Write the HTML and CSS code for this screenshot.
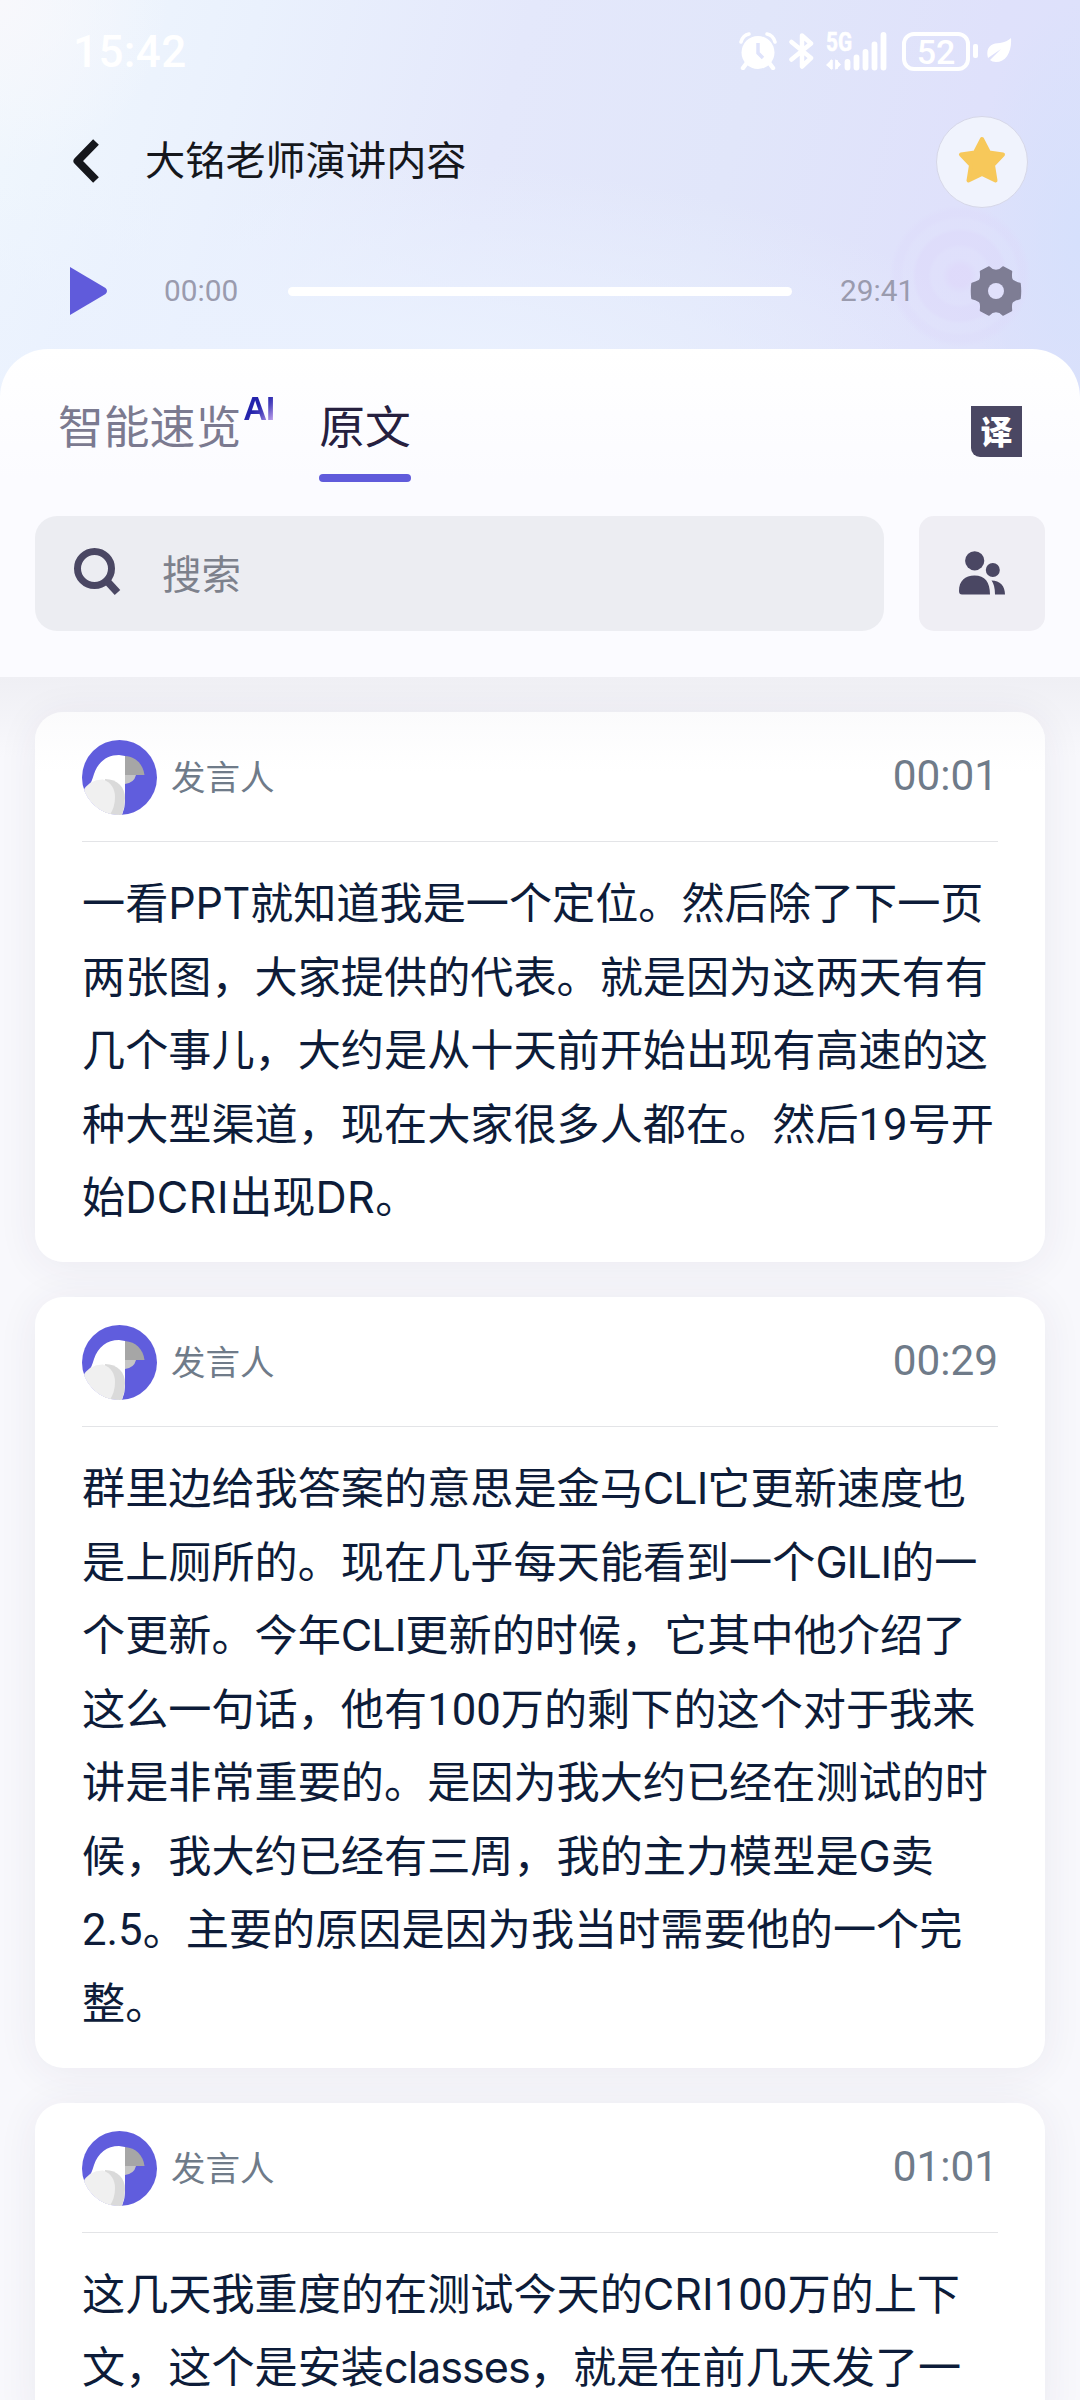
FILE: index.html
```html
<!DOCTYPE html>
<html lang="zh-CN">
<head>
<meta charset="utf-8">
<title>大铭老师演讲内容</title>
<link rel="stylesheet" href="styles.css">
</head>
<body>
<svg class="defs" width="0" height="0" aria-hidden="true">
  <symbol id="avatar" viewBox="0 0 75 75">
    <clipPath id="disc"><circle cx="37.5" cy="37.5" r="37.5"/></clipPath>
    <g clip-path="url(#disc)">
      <rect width="75" height="75" fill="#605ddd"/>
      <path d="M0 52C9 46 10 40 12 34C16 22 25 15 37 15L43 16V61Q43 69 39 77H0Z" fill="#fff"/>
      <path d="M43 16C54 17 61 24 62.500 35H43Z" fill="#a6a6a6"/>
      <path d="M43 35H54Q52 43 43 44Z" fill="#c5c5c5"/>
      <path d="M23 39C36 39 43 48 43 58Q43 68 39 77H20Z" fill="#dadada"/>
      <path d="M0 52Q8 39 21 39.500C29 42 33 49 33 57Q33 69 26 77H0Z" fill="#f0f0f0"/>
    </g>
  </symbol>
</svg>
<div class="screen">
  <header class="top">
    <div class="glow"></div>
    <div class="status">
      <span class="clock">15:42</span>
      <div class="status-icons">
        <svg class="i-alarm" width="38" height="38" viewBox="0 0 38 38"><circle cx="19" cy="20.500" r="16.500" fill="#fff"/><path d="M2 10Q4 3 10 2M28 2Q34 3 36 10" stroke="#fff" stroke-width="3.500" fill="none" stroke-linecap="round"/><path d="M7 32L4 36M31 32L34 36" stroke="#fff" stroke-width="4.500" stroke-linecap="round"/><path d="M19 11V21L24 26" stroke="#dfe3fb" stroke-width="3.500" fill="none"/></svg>
        <svg class="i-bt" width="26" height="38" viewBox="0 0 26 38"><path d="M2.500 10L22 26L13 34.500V3.500L22 11.500L2.500 27.500" stroke="#fff" stroke-width="4.500" fill="none" stroke-linejoin="round" stroke-linecap="round"/></svg>
        <svg class="i-sig" width="62" height="39" viewBox="0 0 62 39"><text x="0" y="19" class="net" textLength="26" lengthAdjust="spacingAndGlyphs">5G</text><path d="M0 33L6 27V38M9.500 27V38L15 32.500" fill="#fff"/><path d="M5.500 28V37M10.500 28V37" stroke="#fff" stroke-width="2.500"/><path d="M21.500 30V35.500M30.500 25.500V35.500M39.500 20V35.500M48.500 12.500V35.500M57.500 3V35.500" stroke="#fff" stroke-width="5.800" stroke-linecap="round"/></svg>
        <div class="battery">52</div>
        <span class="nub"></span>
        <svg class="i-leaf" width="26" height="26" viewBox="0 0 26 26"><path d="M25 0C26 14 20 24 10 24Q6 24 4 22L15 11L2 20C-1 9 6 5 14 5Q21 4 25 0Z" fill="#fff"/></svg>
      </div>
    </div>
    <div class="titlebar">
      <svg class="back" width="28" height="44" viewBox="0 0 28 44"><path d="M24 3L5.500 22L24 41" stroke="#15171c" stroke-width="8" fill="none" stroke-linejoin="round"/></svg>
      <h1>大铭老师演讲内容</h1>
      <div class="fav"><svg width="50" height="50" viewBox="0 0 50 50"><path d="M25 4L32 17.500L46 19.500L36 30L38.500 45.500L25 39L11.500 45.500L14 30L4 19.500L18 17.500Z" fill="#f7c85a" stroke="#f7c85a" stroke-width="4" stroke-linejoin="round"/></svg></div>
    </div>
    <div class="player">
      <svg class="play" width="38" height="48" viewBox="0 0 38 48"><path d="M0 0L35.500 21Q38.500 24 35.500 27L0 48Z" fill="#605bdb"/></svg>
      <span class="time">00:00</span>
      <div class="track"></div>
      <span class="time total">29:41</span>
      <svg class="gear" width="52" height="52" viewBox="-26 -26 52 52"><path fill="#7e7d94" stroke="#7e7d94" stroke-width="1.500" stroke-linejoin="round" d="M-7 -24Q-4 -20.500 0 -20.500Q4 -20.500 7 -24L15.500 -19.500Q14.500 -11 17.500 -10Q20 -8.500 24 -7.500Q25 0 24 7.500Q20 8.500 17.500 10Q14.500 11 15.500 19.500L7 24Q4 20.500 0 20.500Q-4 20.500 -7 24L-15.500 19.500Q-14.500 11 -17.500 10Q-20 8.500 -24 7.500Q-25 0 -24 -7.500Q-20 -8.500 -17.500 -10Q-14.500 -11 -15.500 -19.500Z"/><circle r="8" fill="#e0e0fb"/></svg>
    </div>
  </header>
  <section class="panel">
    <nav class="tabs">
      <span class="tab muted">智能速览</span><span class="ai">AI</span>
      <span class="tab active">原文</span>
      <span class="translate">译</span>
    </nav>
    <div class="search-row">
      <div class="search">
        <svg width="48" height="48" viewBox="0 0 48 48"><circle cx="20.500" cy="20.500" r="17" stroke="#4a4763" stroke-width="7" fill="none"/><path d="M32 32L43.500 44.500" stroke="#4a4763" stroke-width="7.500"/></svg>
        <span>搜索</span>
      </div>
      <div class="people"><svg width="46" height="44" viewBox="0 0 46 44" fill="#4a4763"><circle cx="15.700" cy="9.800" r="9.600"/><circle cx="33.800" cy="19" r="7"/><path d="M3 43.500Q0 43.500 0 40C0 30 6 24.500 15.500 24.500C26 24.500 31 31 31 43.500ZM32.500 29.500C41 29.500 46 35 46 43.500H36Q36 34 32.500 29.500Z"/></svg></div>
    </div>
  </section>
  <main class="list">
    <article class="card">
      <div class="who"><svg class="avatar"><use href="#avatar"/></svg><span>发言人</span><time>00:01</time></div>
      <p>一看<b class="snug">PPT</b>就知道我是一个定位。然后除了下一页<br>两张图，大家提供的代表。就是因为这两天有有<br>几个事儿，大约是从十天前开始出现有高速的这<br>种大型渠道，现在大家很多人都在。然后<b class="num">19</b>号开<br>始<b class="wide">DCRI</b>出现<b class="wide">DR</b>。</p>
    </article>
    <article class="card">
      <div class="who"><svg class="avatar"><use href="#avatar"/></svg><span>发言人</span><time>00:29</time></div>
      <p>群里边给我答案的意思是金马<b class="tight">CLI</b>它更新速度也<br>是上厕所的。现在几乎每天能看到一个<b class="tight">GILI</b>的一<br>个更新。今年<b class="tight">CLI</b>更新的时候，它其中他介绍了<br>这么一句话，他有<b class="num">100</b>万的剩下的这个对于我来<br>讲是非常重要的。是因为我大约已经在测试的时<br>候，我大约已经有三周，我的主力模型是<b>G</b>卖<br><b class="num">2.5</b>。主要的原因是因为我当时需要他的一个完<br>整。</p>
    </article>
    <article class="card">
      <div class="who"><svg class="avatar"><use href="#avatar"/></svg><span>发言人</span><time>01:01</time></div>
      <p>这几天我重度的在测试今天的<b>CRI</b><b class="num">100</b>万的上下<br>文，这个是安装<b class="tight">classes</b>，就是在前几天发了一</p>
    </article>
  </main>
</div>
</body>
</html>
```

FILE: styles.css
```css
* { box-sizing: border-box; }
body { margin: 0; font-family: "Noto Sans CJK SC", sans-serif; }
.defs { position: absolute; }
.screen { width: 1080px; height: 2400px; overflow: hidden; display: flex; flex-direction: column; background: #f8f8fc; }

.top {
  position: relative; height: 397px; flex: none;
  background:
    radial-gradient(circle at 0 0, #f8f8fc 0, rgba(248,248,252,0) 170px),
    radial-gradient(ellipse 110px 240px at 1080px 240px, #d6e0fc, rgba(214,224,252,0)),
    radial-gradient(ellipse 700px 240px at 330px 397px, rgba(234,241,254,.9) 30%, rgba(234,241,254,0)),
    linear-gradient(105deg, #f0f7fd 0, #eaf1fd 22%, #e4e8fb 45%, #e1e6fa 65%, #dfe1fb 85%, #dce1fb 100%);
}
.glow {
  position: absolute; left: 890px; top: 203px; width: 140px; height: 146px; border-radius: 50%;
  background: radial-gradient(circle, rgba(222,214,250,.6) 0 10px, rgba(224,222,251,.4) 18px 28px, rgba(221,216,250,.5) 32px 44px, rgba(224,224,251,.3) 48px 56px, rgba(221,218,250,.4) 60px 65px, rgba(220,216,250,0) 71px);
}
.status { position: relative; display: flex; height: 104px; align-items: center; padding: 0 68px 0 73px; justify-content: space-between; color: #fff; }
.clock { font: 500 44px/50px Roboto, sans-serif; margin-top: -1px; letter-spacing: .4px; }
.status-icons { display: flex; align-items: center; margin-top: -2px; }
.i-bt { margin-left: 12px; }
.i-sig { margin-left: 11px; overflow: visible; }
.net { font: 700 25px Roboto, sans-serif; fill: #fff; stroke: #fff; stroke-width: .6px; }
.battery { margin-left: 14px; width: 68px; height: 39px; border: 4px solid #fff; border-radius: 12px; font: 500 34px/32px Roboto, sans-serif; text-align: center; }
.nub { width: 5px; height: 14px; border-radius: 2px; background: #fff; margin-left: 3px; }
.i-leaf { margin-left: 8px; }

.titlebar { position: relative; display: flex; height: 112px; align-items: center; padding: 4px 52px 0 72px; }
.back { margin-top: -3px; }
h1 { margin: -9px auto 0 45px; font-weight: 400; font-size: 40.200px; line-height: 60px; color: #15171c; }
.fav { width: 92px; height: 92px; border-radius: 50%; background: #f0f3fd; border: 1px solid #d6d7e8; display: flex; align-items: center; justify-content: center; }
.fav svg { margin-top: -4px; }

.player { position: relative; display: flex; align-items: center; height: 150px; padding: 0 58px 0 70px; }
.time { font: 400 29.800px/36px Roboto, sans-serif; color: #9a9bae; margin-left: 56px; width: 74px; white-space: nowrap; }
.track { height: 9px; width: 504px; border-radius: 5px; background: #fff; margin-left: 50px; }
.total { margin-left: 48px; }
.gear { margin-left: auto; }

.panel {
  position: relative; z-index: 1; height: 328px; margin-top: -48px; flex: none; border-radius: 48px 48px 0 0;
  background: linear-gradient(#fff, #fbfbff 130px); padding: 0 35px;
}
.tabs { display: flex; height: 167px; align-items: flex-start; padding: 35px 23px 0; }
.tab { font-size: 45.800px; line-height: 80px; white-space: nowrap; }
.muted { color: #7b7a90; }
.ai { font: 700 33px/38px "Liberation Sans", sans-serif; margin: 6px 45px 0 2px; width: 31px; background: linear-gradient(135deg, #2423ac 45%, #4a42bd 60%, #b79ae8 85%); background-clip: text; -webkit-background-clip: text; color: transparent; white-space: nowrap; letter-spacing: -1px; }
.active { color: #26203f; display: flex; flex-direction: column; gap: 10px; }
.active::after { content: ""; height: 8px; border-radius: 4px; background: #605bdb; }
.translate { margin: 22px 0 0 auto; width: 51px; height: 51px; border-radius: 0 0 0 9px; background: #4a4763; color: #fff; font-weight: 900; font-size: 32px; line-height: 49px; text-align: center; }
.search-row { display: flex; gap: 35px; }
.search { width: 849px; height: 115px; border-radius: 22px; background: #ecedf2; display: flex; align-items: center; padding-left: 39px; font-size: 39.500px; color: #7d818c; }
.search svg { margin-top: -3px; }
.search span { margin-left: 40px; margin-top: -4px; }
.people { width: 126px; height: 115px; border-radius: 15px; background: #efeef4; display: flex; align-items: center; justify-content: center; }
.people svg { margin-top: -2px; }

.list { flex: 1; padding: 35px 35px 0; display: flex; flex-direction: column; gap: 35px; background: linear-gradient(#efeff4, rgba(247,247,251,0) 80px); }
.card { flex: none; background: #fff; border-radius: 28px; padding: 0 47px 30.500px; box-shadow: 0 4px 40px rgba(50,40,90,.07); }
.card:first-child { background: linear-gradient(#fbfbfc, #fff 60px); }
.who { display: flex; align-items: center; height: 130px; padding-top: 2px; border-bottom: 1px solid #e3e4e7; color: #6f7b89; }
.avatar { width: 75px; height: 75px; flex: none; }
.who span { font-size: 34.500px; margin: -5px 0 0 14px; }
time { font: 400 42.300px/50px Roboto, sans-serif; margin-left: auto; margin-top: -3px; }
.card p { margin: 22px 0 0; font-size: 43.150px; line-height: 73.500px; color: #0d1c39; white-space: nowrap; }
.card b { font-family: Inter, sans-serif; font-weight: 400; line-height: 0; }
.card .num { font-family: Roboto, sans-serif; font-size: 43.700px; }
.card .snug { letter-spacing: -.4px; }
.card .tight { letter-spacing: -1px; }
.card .wide { letter-spacing: .5px; }
```
